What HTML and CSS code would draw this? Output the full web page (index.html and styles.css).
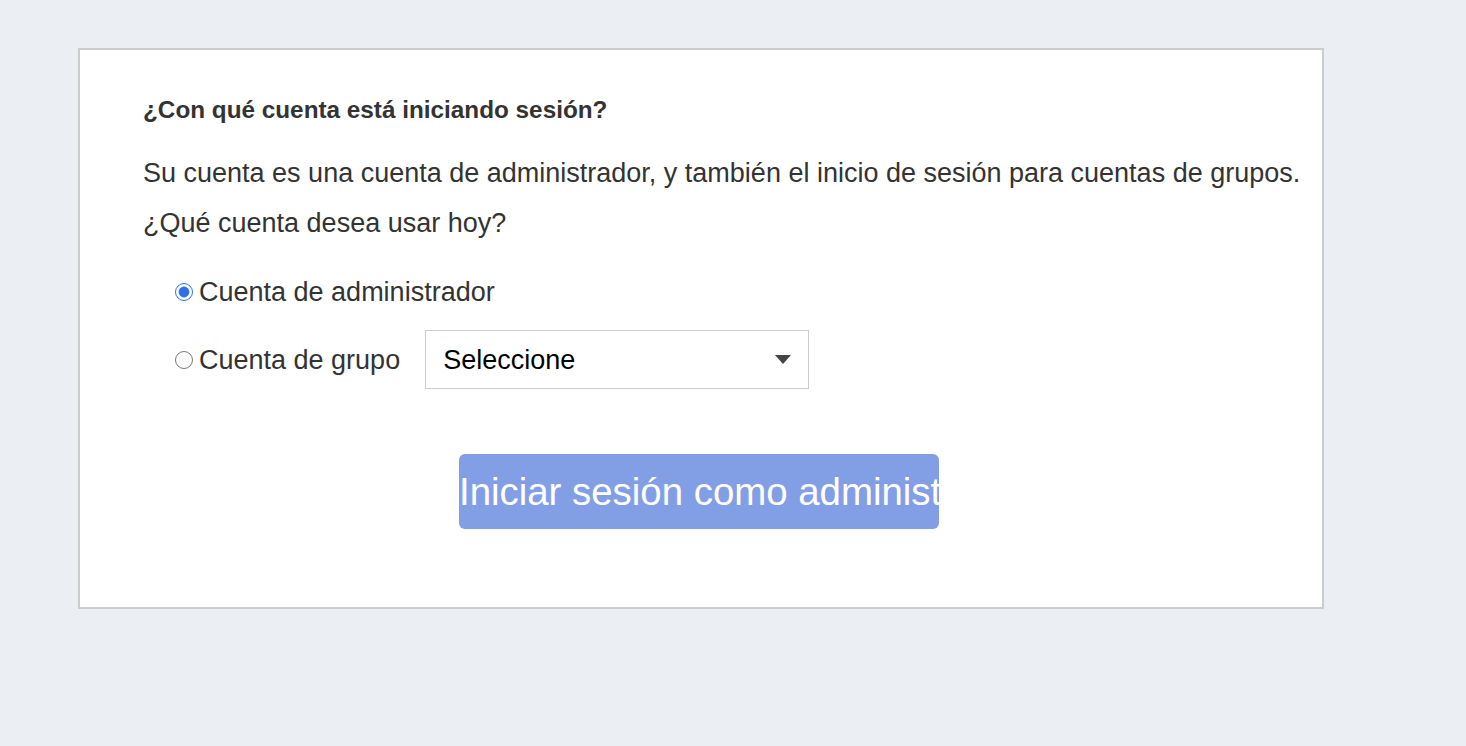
FILE: index.html
```html
<!DOCTYPE html>
<html lang="es">
<head>
  <meta charset="UTF-8">
  <title>Seleccionar cuenta</title>
  <link rel="stylesheet" href="styles.css">
</head>
<body>
  <main class="page">
    <section class="card">
      <h1 class="title">¿Con qué cuenta está iniciando sesión?</h1>
      <p class="intro">Su cuenta es una cuenta de administrador, y también el inicio de sesión para cuentas de grupos.<br>¿Qué cuenta desea usar hoy?</p>
      <div class="options">
        <label class="option">
          <input type="radio" name="account" checked>
          <span>Cuenta de administrador</span>
        </label>
        <div class="option">
          <label class="option-label">
            <input type="radio" name="account">
            <span>Cuenta de grupo</span>
          </label>
          <div class="select">
            <span>Seleccione</span>
            <span class="caret"></span>
          </div>
        </div>
      </div>
      <div class="actions">
        <button class="submit">Iniciar sesión como administrador</button>
      </div>
    </section>
  </main>
</body>
</html>
```

FILE: styles.css
```css
html, body {
  margin: 0;
  height: 100%;
  background: #ebeff4;
  font-family: "Liberation Sans", Arial, sans-serif;
  color: #333;
}

.page {
  padding: 48px 0 0 78px;
}

.card {
  width: 1242px;
  height: 557px;
  border: 2px solid #cccccc;
  background: #fff;
}

.title {
  margin: 46px 0 0 63px;
  font-size: 24.3px;
  font-weight: bold;
  line-height: 28px;
}

.intro {
  margin: 24px 0 0 63px;
  font-size: 27px;
  line-height: 50px;
}

.options {
  margin: 28px 0 0 95px;
  display: flex;
  flex-direction: column;
  gap: 22px;
}

.option, .option-label {
  display: flex;
  align-items: center;
  font-size: 27px;
  line-height: 32px;
  color: #333;
}

.option-label {
  margin-right: 25px;
}

.option input {
  width: 18px;
  height: 18px;
  margin: 0 6px 0 0;
  accent-color: #2f6fe8;
}

.select {
  display: flex;
  align-items: center;
  justify-content: space-between;
  box-sizing: border-box;
  width: 384px;
  height: 59px;
  border: 1px solid #cccccc;
  padding: 0 17px 0 17px;
  font-size: 27px;
  color: #000;
}

.caret {
  width: 0;
  height: 0;
  border-left: 8px solid transparent;
  border-right: 8px solid transparent;
  border-top: 9px solid #444;
}

.actions {
  margin: 65px 0 0 379px;
}

.submit {
  width: 480px;
  height: 75px;
  padding: 0;
  border: none;
  border-radius: 6px;
  background: #829fe6;
  color: #fff;
  font-family: "Liberation Sans", Arial, sans-serif;
  font-size: 38.4px;
  white-space: nowrap;
  overflow: hidden;
  text-align: left;
}
```
